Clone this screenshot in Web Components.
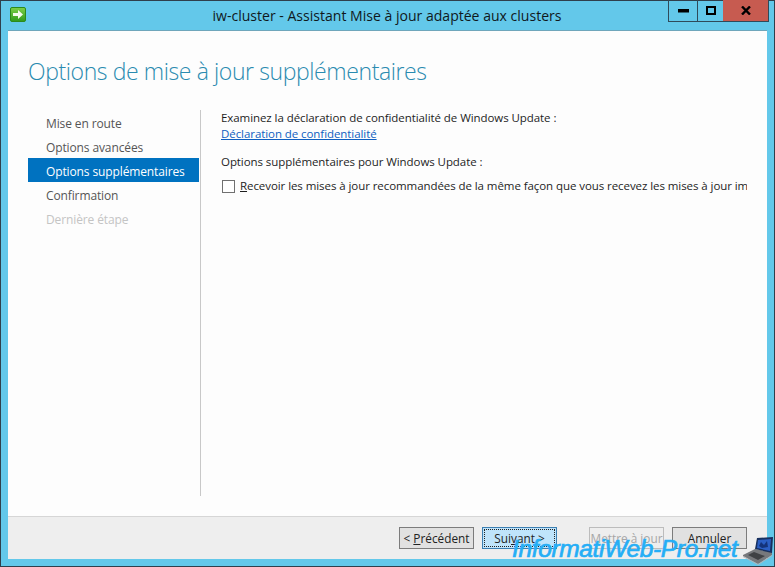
<!DOCTYPE html>
<html lang="fr">
<head>
<meta charset="utf-8">
<title>Assistant Mise à jour adaptée aux clusters</title>
<style>
    html, body { margin: 0; height: 100%; }
    body { font-family: "Open Sans", "Liberation Sans", sans-serif; font-size: 12px; color: #1e1e1e; overflow: hidden; }
</style>
</head>
<body>
<wizard-window window-title="iw-cluster - Assistant Mise à jour adaptée aux clusters">
    <wizard-nav slot="nav">
        <nav-item>Mise en route</nav-item>
        <nav-item>Options avancées</nav-item>
        <nav-item selected>Options supplémentaires</nav-item>
        <nav-item>Confirmation</nav-item>
        <nav-item disabled>Dernière étape</nav-item>
    </wizard-nav>
    <options-page slot="content"></options-page>
    <wizard-button slot="buttons"><span>&lt; <u>P</u>récédent</span></wizard-button>
    <wizard-button slot="buttons" focused><span>Sui<u>v</u>ant &gt;</span></wizard-button>
    <wizard-button slot="buttons" disabled class="gap-left"><span>Mettre à jour</span></wizard-button>
    <wizard-button slot="buttons"><span>Annuler</span></wizard-button>
</wizard-window>
<site-watermark></site-watermark>

<script>
class WizardWindow extends HTMLElement {
    constructor() {
        super();
        this.attachShadow({ mode: 'open' });
    }

    connectedCallback() {
        const title = this.getAttribute('window-title');
        this.shadowRoot.innerHTML = `
            <style>
                :host {
                    display: flex;
                    flex-direction: column;
                    box-sizing: border-box;
                    width: 775px;
                    height: 567px;
                    background: #63c8ea;
                    border: 1px solid #2f3f4c;
                }
                .titlebar {
                    display: flex;
                    height: 30px;
                    flex: none;
                    position: relative;
                    justify-content: center;
                }
                .app-icon {
                    position: absolute;
                    left: 9px;
                    top: 6px;
                    width: 16px;
                    height: 15px;
                }
                .title {
                    font-size: 14.05px;
                    line-height: 17px;
                    padding-top: 6px;
                    color: #10181c;
                    margin-left: -1px;
                }
                .controls {
                    position: absolute;
                    right: 5px;
                    top: -1px;
                    display: flex;
                    height: 21px;
                    border: 1px solid #2f4a5a;
                    border-top: none;
                }
                .ctl { display: flex; align-items: center; justify-content: center; }
                .min { width: 28px; border-right: 1px solid #2f4a5a; }
                .max { width: 25px; }
                .close { width: 45px; background: #c75b50; }
                .body {
                    flex: 1;
                    margin: 0 7px 7px;
                    background: #fdfdfd;
                    display: flex;
                    flex-direction: column;
                    min-height: 0;
                    box-shadow: 0 -1px 0 #6fa6bb;
                }
                h1 {
                    margin: 0;
                    font-size: 23px;
                    letter-spacing: -0.4px;
                    font-weight: 300;
                    line-height: 32px;
                    color: #2a8bb0;
                    padding: 24px 0 0 20px;
                    height: 31px;
                    flex: none;
                    white-space: nowrap;
                }
                .main { flex: 1; display: flex; min-height: 0; padding: 0 20px 0 20px; }
                .left { width: 172px; flex: none; padding-top: 24px; }
                .rule { width: 1px; background: #c8c8c8; margin: 24px 0 20px 0; flex: none; }
                .right { flex: 1; min-width: 0; padding: 24px 0 0 20px; overflow: hidden; }
                .footer {
                    height: 43px;
                    flex: none;
                    background: #eeeeee;
                    border-top: 1px solid #d6d6d6;
                    display: flex;
                    justify-content: flex-end;
                    gap: 8px;
                    padding: 10px 20px 0 0;
                    box-sizing: border-box;
                }
                ::slotted(.gap-left) { margin-left: 24px; }
            </style>
            <div class="titlebar">
                <svg class="app-icon" viewBox="0 0 16 15">
                    <defs><linearGradient id="g" x1="0" y1="0" x2="0" y2="1">
                        <stop offset="0" stop-color="#7ed04a"/><stop offset="1" stop-color="#2f9a1c"/>
                    </linearGradient></defs>
                    <rect x="0.5" y="0.5" width="15" height="14" rx="1.5" fill="url(#g)" stroke="#2c8a1c"/>
                    <path d="M3 6h5V3l5 4.5-5 4.5V9H3z" fill="#f4fbee"/>
                </svg>
                <div class="title">${title}</div>
                <div class="controls">
                    <div class="ctl min"><svg width="11" height="4" viewBox="0 0 11 4"><rect width="11" height="3.5" fill="#000"/></svg></div>
                    <div class="ctl max"><svg width="10" height="9" viewBox="0 0 10 9"><rect x="1" y="1" width="8" height="7" fill="none" stroke="#000" stroke-width="2"/></svg></div>
                    <div class="ctl close"><svg width="10" height="9" viewBox="0 0 10 9"><path d="M1 .5l8 8M9 .5l-8 8" stroke="#000" stroke-width="2.4" fill="none"/></svg></div>
                </div>
            </div>
            <div class="body">
                <h1>Options de mise à jour supplémentaires</h1>
                <div class="main">
                    <div class="left"><slot name="nav"></slot></div>
                    <div class="rule"></div>
                    <div class="right"><slot name="content"></slot></div>
                </div>
                <div class="footer"><slot name="buttons"></slot></div>
            </div>
        `;
    }
}

class WizardNav extends HTMLElement {
    constructor() {
        super();
        this.attachShadow({ mode: 'open' });
        this.shadowRoot.innerHTML = `
            <style>
                :host { display: flex; flex-direction: column; }
            </style>
            <slot></slot>
        `;
    }
}

class NavItem extends HTMLElement {
    constructor() {
        super();
        this.attachShadow({ mode: 'open' });
        this.shadowRoot.innerHTML = `
            <style>
                :host {
                    display: block;
                    height: 24px;
                    line-height: 28px;
                    padding-left: 18px;
                    margin-right: 1px;
                    font-size: 12px;
                    letter-spacing: -0.12px;
                    color: #555;
                    white-space: nowrap;
                }
                :host([selected]) { background: #0072c0; color: #fff; }
                :host([disabled]) { color: #c4c4c4; }
            </style>
            <slot></slot>
        `;
    }
}

class OptionsPage extends HTMLElement {
    constructor() {
        super();
        this.attachShadow({ mode: 'open' });
        this.shadowRoot.innerHTML = `
            <style>
                :host { display: block; font-size: 11.5px; letter-spacing: -0.07px; line-height: 16px; color: #1e1e1e; white-space: nowrap; }
                a { color: #0f5fc0; text-decoration: underline; display: block; }
                .opts { margin-top: 12px; }
                .check { display: flex; align-items: center; gap: 5px; margin-top: 8px; padding-left: 1px; }
                .box { width: 11px; height: 11px; border: 1px solid #707070; background: #fff; flex: none; }
            </style>
            <div>Examinez la déclaration de confidentialité de Windows Update :</div>
            <a href="#">Déclaration de confidentialité</a>
            <div class="opts">Options supplémentaires pour Windows Update :</div>
            <div class="check">
                <span class="box"></span>
                <span><u>R</u>ecevoir les mises à jour recommandées de la même façon que vous recevez les mises à jour importantes</span>
            </div>
        `;
    }
}

class WizardButton extends HTMLElement {
    constructor() {
        super();
        this.attachShadow({ mode: 'open' });
        this.shadowRoot.innerHTML = `
            <style>
                :host {
                    display: flex;
                    box-sizing: border-box;
                    width: 75px;
                    height: 22px;
                    align-items: center;
                    justify-content: center;
                    background: #e1e1e1;
                    border: 1px solid #7c7c7c;
                    color: #222;
                    font-size: 11.8px;
                    white-space: nowrap;
                    position: relative;
                }
                :host([focused]) { background: #bfe4fb; border-color: #3c7fb1; }
                :host([focused])::after {
                    content: "";
                    position: absolute;
                    inset: 1px;
                    border: 1px dotted #222;
                }
                :host([disabled]) { background: #eeeeee; border-color: #bcbcbc; color: #a6a6a6; }
            </style>
            <slot></slot>
        `;
    }
}

class SiteWatermark extends HTMLElement {
    constructor() {
        super();
        this.attachShadow({ mode: 'open' });
        this.shadowRoot.innerHTML = `
            <style>
                :host {
                    position: absolute;
                    left: 512px;
                    top: 533px;
                    width: 263px;
                    height: 34px;
                    pointer-events: none;
                }
                .mark {
                    position: absolute;
                    left: 0;
                    top: 1px;
                    font: italic 400 24.5px/30px "Liberation Sans", Arial, sans-serif;
                    letter-spacing: -0.35px;
                    color: #25aef6;
                    white-space: nowrap;
                    -webkit-text-stroke: 0.7px #25aef6;
                }
                svg { position: absolute; left: 231px; top: 4px; }
            </style>
            <span class="mark">InformatiWeb-Pro.net</span>
            <svg width="32" height="28" viewBox="0 0 32 28">
                <path d="M12 12L0 18v1l15 8 14-9v-3z" fill="#77797c"/>
                <path d="M0 19l15 8 14-9v1l-14 9L0 20z" fill="#b4b6b8"/>
                <path d="M11 15l-6 3 10 5 7-4z" fill="#3f4144"/>
                <path d="M14 1L30 0l-1 16-17-4z" fill="#17305f"/>
                <path d="M15 3l13-1-1 12-13-3z" fill="#2b5fc4"/>
                <path d="M18 5l3 3 3-4 1 6-6 1-3-2z" fill="#14337a"/>
            </svg>
        `;
    }
}

customElements.define('wizard-window', WizardWindow);
customElements.define('wizard-nav', WizardNav);
customElements.define('nav-item', NavItem);
customElements.define('options-page', OptionsPage);
customElements.define('wizard-button', WizardButton);
customElements.define('site-watermark', SiteWatermark);
</script>
</body>
</html>
